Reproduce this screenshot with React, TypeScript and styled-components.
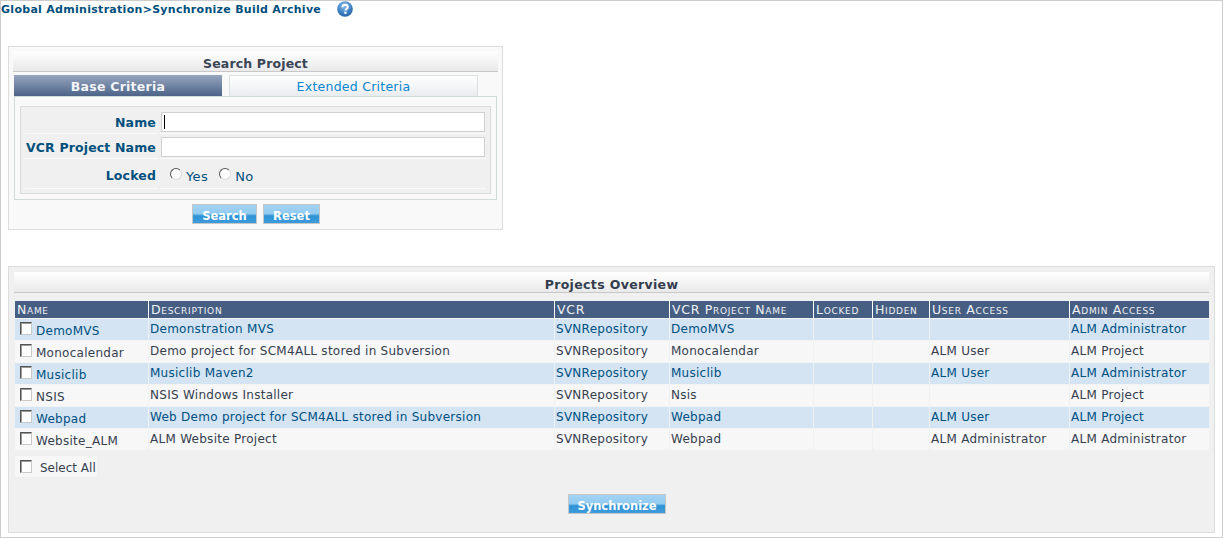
import React from "react";
import styled, { createGlobalStyle } from "styled-components";

const GlobalStyle = createGlobalStyle`
  html, body { margin: 0; padding: 0; background: #fff; }
  body { font-family: "DejaVu Sans", Verdana, sans-serif; font-size: 12px; color: #36404f; }
`;

const columns = [134, 406, 115, 144, 59, 57, 140, 139];
const headers = ["Name", "Description", "VCR", "VCR Project Name", "Locked", "Hidden", "User Access", "Admin Access"];

const projects = [
  { name: "DemoMVS", description: "Demonstration MVS", vcr: "SVNRepository", vcrName: "DemoMVS", user: "", admin: "ALM Administrator", link: true },
  { name: "Monocalendar", description: "Demo project for SCM4ALL stored in Subversion", vcr: "SVNRepository", vcrName: "Monocalendar", user: "ALM User", admin: "ALM Project", link: false },
  { name: "Musiclib", description: "Musiclib Maven2", vcr: "SVNRepository", vcrName: "Musiclib", user: "ALM User", admin: "ALM Administrator", link: true },
  { name: "NSIS", description: "NSIS Windows Installer", vcr: "SVNRepository", vcrName: "Nsis", user: "", admin: "ALM Project", link: false },
  { name: "Webpad", description: "Web Demo project for SCM4ALL stored in Subversion", vcr: "SVNRepository", vcrName: "Webpad", user: "ALM User", admin: "ALM Project", link: true },
  { name: "Website_ALM", description: "ALM Website Project", vcr: "SVNRepository", vcrName: "Webpad", user: "ALM Administrator", admin: "ALM Administrator", link: false },
];

function HelpIcon() {
  return (
    <svg width="16" height="16" viewBox="0 0 16 16">
      <defs>
        <radialGradient id="help" cx="45%" cy="30%" r="75%">
          <stop offset="0%" stopColor="#8fc0ea" />
          <stop offset="60%" stopColor="#3f82c4" />
          <stop offset="100%" stopColor="#1f5c9e" />
        </radialGradient>
      </defs>
      <circle cx="8" cy="8" r="7.8" fill="url(#help)" />
      <path d="M5.4 6.2C5.4 4.6 6.6 3.7 8.1 3.7c1.6 0 2.7.9 2.7 2.2 0 1.9-2.2 1.9-2.2 3.5" fill="none" stroke="#fff" strokeWidth="2" />
      <rect x="7.3" y="10.6" width="2.3" height="2.2" fill="#fff" />
    </svg>
  );
}

export default function App() {
  return (
    <Page>
      <GlobalStyle />
      <Breadcrumb>
        <span>Global Administration&gt;Synchronize Build Archive</span>
        <HelpIcon />
      </Breadcrumb>

      <SearchPanel>
        <TitleBar>Search Project</TitleBar>
        <Tabs>
          <BaseTab>Base Criteria</BaseTab>
          <ExtendedTab>Extended Criteria</ExtendedTab>
        </Tabs>
        <CriteriaBox>
          <CriteriaGrid>
            <Label>Name</Label>
            <Field>
              <TextInput $caret />
            </Field>
            <Label>VCR Project Name</Label>
            <Field>
              <TextInput />
            </Field>
            <LockedLabel>Locked</LockedLabel>
            <RadioField>
              <RadioOption><Radio />Yes</RadioOption>
              <RadioOption><Radio />No</RadioOption>
            </RadioField>
          </CriteriaGrid>
        </CriteriaBox>
        <SearchButtons>
          <ActionButton $width={65}>Search</ActionButton>
          <ActionButton $width={57}>Reset</ActionButton>
        </SearchButtons>
      </SearchPanel>

      <ProjectsPanel>
        <ProjectsTitle>Projects Overview</ProjectsTitle>
        <Table>
          <colgroup>
            {columns.map((w, i) => (
              <col key={i} style={{ width: w }} />
            ))}
          </colgroup>
          <thead>
            <tr>
              {headers.map((h) => (
                <HeaderCell key={h}>{h}</HeaderCell>
              ))}
            </tr>
          </thead>
          <tbody>
            {projects.map((p) => (
              <Row key={p.name} $link={p.link}>
                <Cell>
                  <NameCell>
                    <Checkbox />
                    <NameText>{p.name}</NameText>
                  </NameCell>
                </Cell>
                <Cell>{p.description}</Cell>
                <Cell>{p.vcr}</Cell>
                <Cell>{p.vcrName}</Cell>
                <Cell />
                <Cell />
                <Cell>{p.user}</Cell>
                <Cell>{p.admin}</Cell>
              </Row>
            ))}
          </tbody>
        </Table>
        <SelectAll>
          <Checkbox />
          <SelectAllText>Select All</SelectAllText>
        </SelectAll>
        <SyncRow>
          <ActionButton $width={98}>Synchronize</ActionButton>
        </SyncRow>
      </ProjectsPanel>
    </Page>
  );
}

const Page = styled.div`
  box-sizing: border-box;
  width: 1223px;
  height: 538px;
  overflow: hidden;
  border: 1px solid #ccc;
`;

const Breadcrumb = styled.div`
  display: flex;
  align-items: center;
  gap: 16px;
  height: 16px;
  font-size: 11px;
  font-weight: bold;
  color: #004f7d;
  letter-spacing: 0.29px;
`;

const SearchPanel = styled.div`
  box-sizing: border-box;
  width: 495px;
  height: 184px;
  margin: 29px 0 0 7px;
  padding: 4px;
  background: #f9f9f9;
  border: 1px solid #dcdcdc;
`;

const TitleBar = styled.div`
  box-sizing: border-box;
  height: 21px;
  padding-top: 5px;
  text-align: center;
  font-size: 12.5px;
  letter-spacing: 0.15px;
  line-height: 16px;
  font-weight: bold;
  color: #3b4556;
  background: linear-gradient(#fff, #e9e9e9);
  border-bottom: 1px solid #c8c8c8;
`;

const Tabs = styled.div`
  display: flex;
  gap: 7px;
  height: 21px;
  margin: 3px 0 0 1px;
`;

const BaseTab = styled.div`
  width: 208px;
  text-align: center;
  line-height: 23px;
  font-size: 12.5px;
  letter-spacing: 0.25px;
  font-weight: bold;
  color: #f2f4f7;
  background: linear-gradient(#97a6bf, #4c6488);
`;

const ExtendedTab = styled.div`
  box-sizing: border-box;
  width: 249px;
  text-align: center;
  line-height: 22px;
  font-size: 12.5px;
  letter-spacing: 0.25px;
  color: #0a86cf;
  background: linear-gradient(#fff, #e9ecee);
  border: 1px solid #dbe0e0;
  border-bottom: 0;
`;

const CriteriaBox = styled.div`
  box-sizing: border-box;
  width: 483px;
  height: 104px;
  margin-left: 1px;
  padding: 9px 5px 5px;
  border: 1px solid #d3dada;
`;

const CriteriaGrid = styled.div`
  box-sizing: border-box;
  display: grid;
  grid-template-columns: 133px 1fr;
  grid-template-rows: 27px 25px 30px;
  align-content: start;
  column-gap: 2px;
  height: 88px;
  padding: 0 4px;
  background: #f0f0f0;
  border: 1px solid #d8dcdc;
`;

const Label = styled.div`
  display: flex;
  align-items: flex-end;
  justify-content: flex-end;
  padding-right: 2px;
  font-size: 12.5px;
  line-height: 20px;
  letter-spacing: 0.15px;
  font-weight: bold;
  color: #004f7d;
  border-bottom: 1px solid #fafafa;
`;

const LockedLabel = styled(Label)`
  padding-bottom: 2px;
`;

const Field = styled.div`
  display: flex;
  align-items: flex-end;
  padding: 0 0 1px 1px;
  border-bottom: 1px solid #fafafa;
`;

const TextInput = styled.div<{ $caret?: boolean }>`
  box-sizing: border-box;
  width: 324px;
  height: 20px;
  background: #fff;
  border: 1px solid #d0d0d0;
  &::before {
    content: "";
    display: ${(p) => (p.$caret ? "block" : "none")};
    width: 1px;
    height: 14px;
    margin: 2px 0 0 2px;
    background: #000;
  }
`;

const RadioField = styled(Field)`
  align-items: center;
  gap: 11px;
  padding: 0 0 0 10px;
`;

const RadioOption = styled.label`
  display: flex;
  align-items: center;
  gap: 4px;
  font-size: 13px;
  letter-spacing: 0.4px;
  color: #004f7d;
  padding-top: 5px;
`;

const Radio = styled.span`
  box-sizing: border-box;
  width: 12px;
  height: 12px;
  margin-top: -5px;
  background: #fff;
  border-radius: 50%;
  border: 1.5px solid;
  border-color: #555 #ddd #ddd #555;
`;

const SearchButtons = styled.div`
  display: flex;
  gap: 6px;
  margin: 4px 0 0 179px;
`;

const ActionButton = styled.div<{ $width: number }>`
  box-sizing: border-box;
  width: ${(p) => p.$width}px;
  height: 20px;
  text-align: center;
  font-size: 11.5px;
  font-weight: bold;
  line-height: 22px;
  color: #fff;
  background: linear-gradient(#a3d3f3 0%, #92cbf0 48%, #2f93d6 60%, #3d9bdb 100%);
  border: 1px solid #c6c6c6;
`;

const ProjectsPanel = styled.div`
  box-sizing: border-box;
  width: 1207px;
  height: 267px;
  margin: 36px 0 0 7px;
  padding: 5px;
  background: #f0f0f0;
  border: 1px solid #dcdcdc;
`;

const ProjectsTitle = styled(TitleBar)`
  letter-spacing: 0.35px;
  color: #333d4e;
`;

const Table = styled.table`
  table-layout: fixed;
  border-collapse: separate;
  border-spacing: 0;
  width: 1194px;
  margin: 8px 0 0 1px;
`;

const HeaderCell = styled.th`
  box-sizing: border-box;
  height: 17px;
  padding: 0 0 0 2px;
  text-align: left;
  font-size: 12.5px;
  letter-spacing: 0.7px;
  font-weight: normal;
  font-variant: small-caps;
  line-height: 17px;
  color: #eef1f5;
  background: #475e83;
  border-right: 1px solid #fff;
  white-space: nowrap;
  overflow: hidden;
  &:last-child { border-right: 0; }
`;

const Row = styled.tr<{ $link: boolean }>`
  background: ${(p) => (p.$link ? "#d4e4f2" : "#f7f7f7")};
  color: ${(p) => (p.$link ? "#005082" : "#36404f")};
`;

const Cell = styled.td`
  box-sizing: border-box;
  height: 22px;
  padding: 0 0 0 1px;
  font-size: 12px;
  letter-spacing: 0.27px;
  line-height: 20px;
  vertical-align: top;
  white-space: nowrap;
  border-right: 1px solid #eef1f3;
  border-top: 1px solid #f4f4f4;
  &:last-child { border-right: 0; }
`;

const NameCell = styled.div`
  display: flex;
  align-items: flex-start;
  gap: 4px;
  height: 20px;
  padding-left: 4px;
`;

const NameText = styled.span`
  padding-top: 2px;
`;

const Checkbox = styled.span`
  box-sizing: border-box;
  flex: none;
  display: block;
  width: 12px;
  height: 13px;
  margin-top: 3px;
  background: #fff;
  border: 1px solid;
  border-color: #555 #c8c8c8 #c8c8c8 #555;
  box-shadow: inset 1px 1px 0 #999;
`;

const SelectAll = styled.div`
  display: flex;
  align-items: flex-start;
  gap: 8px;
  box-sizing: border-box;
  width: 82px;
  height: 21px;
  margin: 6px 0 0 1px;
  padding: 1px 1px 0 5px;
  font-size: 12px;
  line-height: 20px;
  white-space: nowrap;
  background: #f7f7f7;
`;

const SelectAllText = styled.span`
  padding-top: 1px;
`;

const SyncRow = styled.div`
  display: flex;
  margin: 17px 0 0 554px;
`;
